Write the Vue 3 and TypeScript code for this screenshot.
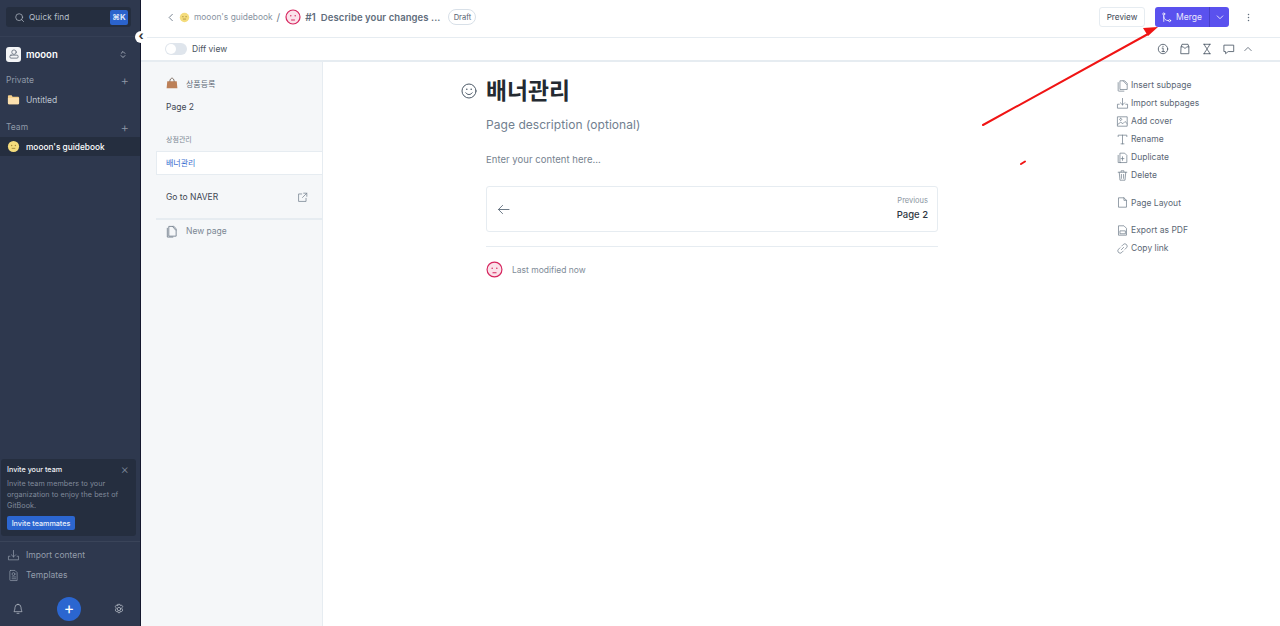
<script setup lang="ts">
interface MenuItem { label: string; icon: string; gap?: boolean }
const menu: MenuItem[] = [
  { label: 'Insert subpage', icon: 'M6 2.500h6l3.500 3.500v8.500H6zM3 5v11a.8.8 0 0 0 .8.8H11M10 2.500l4.500 5' },
  { label: 'Import subpages', icon: 'M9 2v9M6 8l3 3 3-3M4.500 10H2v5.500h14V10h-2.500' },
  { label: 'Add cover', icon: 'M2.500 2.500h13v13h-13zM2.500 13l4-3 3 2 3-3 3 3M6.500 4.500a1.500 1.500 0 1 0 .01 0' },
  { label: 'Rename', icon: 'M3 5V3h12v2M9 3v12M7 15h4' },
  { label: 'Duplicate', icon: 'M6 3h6l3 3v10H6zM3 6v10h3M9 8v5M7 10.500h4' },
  { label: 'Delete', icon: 'M3 4.500h12M7 4V2.500h4V4M4.500 4.500l1 11h7l1-11M7.500 7.500v5.500M10.500 7.500v5.500' },
  { label: 'Page Layout', icon: 'M4 2.500h7l3.500 3.500v9.500H4zM11 2.500V6h3.500', gap: true },
  { label: 'Export as PDF', icon: 'M4 2.500h7l3.500 3.500v9.500H4zM6 9.500h7v4H6z', gap: true },
  { label: 'Copy link', icon: 'M7.500 10.500l3-3M8 5.500l2-2a3 3 0 0 1 4.500 4.500l-2 2M10 12.500l-2 2A3 3 0 0 1 3.500 10l2-2' },
]
</script>

<template>
  <div class="app">
    <aside class="side">
      <div class="search-wrap">
        <div class="search">
          <svg class="ic14" viewBox="0 0 16 16"><circle cx="7.500" cy="7.500" r="5" /><path d="M11 11l3 3" /></svg>
          <span class="search-label">Quick find</span>
          <kbd class="kbd">⌘K</kbd>
        </div>
      </div>
      <div class="org">
        <span class="org-logo">
          <svg viewBox="0 0 16 16"><circle cx="8" cy="5.500" r="3" /><rect x="2.500" y="9.500" width="11" height="4" rx="1.500" /></svg>
        </span>
        <span class="org-name">mooon</span>
        <svg class="updown" viewBox="0 0 8 12"><path d="M1.500 4.500L4 2l2.500 2.500M1.500 7.500L4 10l2.500-2.500" /></svg>
      </div>
      <div class="sec first"><span>Private</span><span class="plus">+</span></div>
      <div class="row">
        <svg class="emoji" viewBox="0 0 14 14"><path d="M1 3.500a1 1 0 0 1 1-1h3l1 1.500h6a1 1 0 0 1 1 1v6a1 1 0 0 1-1 1H2a1 1 0 0 1-1-1z" fill="#f5cf8a" /><path d="M1 5.500h12v5.500a1 1 0 0 1-1 1H2a1 1 0 0 1-1-1z" fill="#fbe0ae" /></svg>
        <span>Untitled</span>
      </div>
      <div class="sec"><span>Team</span><span class="plus">+</span></div>
      <div class="row active">
        <svg class="emoji" viewBox="0 0 14 14"><circle cx="7" cy="7" r="6" fill="#f4dc7c" /><circle cx="5" cy="6" r=".8" fill="#a58a3a" /><circle cx="9" cy="6" r=".8" fill="#a58a3a" /><path d="M5.500 9h3" stroke="#a58a3a" fill="none" /></svg>
        <span>mooon's guidebook</span>
      </div>
      <div class="grow"></div>
      <div class="invite">
        <div class="invite-head"><span>Invite your team</span><span class="x">×</span></div>
        <p>Invite team members to your organization to enjoy the best of GitBook.</p>
        <button class="invite-btn">Invite teammates</button>
      </div>
      <div class="foot-links">
        <div class="flink">
          <svg class="ic12" viewBox="0 0 18 18"><path d="M9 2v9M6 8l3 3 3-3M4 10H2v5h14v-5h-2" /></svg>
          <span>Import content</span>
        </div>
        <div class="flink">
          <svg class="ic12" viewBox="0 0 18 18"><path d="M5 2h6l3 3v11H5a1 1 0 0 1-1-1V3a1 1 0 0 1 1-1zM7 11h5M7 13.500h5" /><circle cx="9" cy="7" r="2" /></svg>
          <span>Templates</span>
        </div>
      </div>
      <div class="foot-btns">
        <svg class="bell" viewBox="0 0 18 18"><path d="M9 2a4.500 4.500 0 0 0-4.500 4.500c0 4-1.500 5.500-1.500 6.500h12c0-1-1.500-2.500-1.500-6.500A4.500 4.500 0 0 0 9 2zM7.500 15.500h3" /></svg>
        <span class="fab">+</span>
        <svg class="bell" viewBox="0 0 18 18"><circle cx="9" cy="9" r="2.500" /><path d="M7.500 2h3l.5 2 2-.8 1.700 2.500-1.500 1.500.1 1.800 1.500 1.500L13 13l-2-.8-.5 2.300h-3L7 12.200 5 13 3.300 10.500l1.500-1.500-.1-1.800L3.300 5.700 5 3.200 7 4z" /></svg>
      </div>
    </aside>

    <span class="collapse">‹</span>

    <main class="main">
      <header class="top">
        <svg class="chev" viewBox="0 0 8 12"><path d="M5.500 2.500L2 6l3.500 3.500" /></svg>
        <svg class="crumb-emoji" viewBox="0 0 14 14"><circle cx="7" cy="7" r="6" fill="#f4dc7c" /><circle cx="5" cy="6" r=".8" fill="#a58a3a" /><circle cx="9" cy="6" r=".8" fill="#a58a3a" /><path d="M5.500 9h3" stroke="#a58a3a" fill="none" /></svg>
        <span class="crumb">mooon's guidebook</span>
        <span class="slash">/</span>
        <svg class="avatar" viewBox="0 0 16 16"><circle cx="8" cy="8" r="7" fill="#fbe2ea" stroke="#d6265f" stroke-width="1.200" /><circle cx="5.800" cy="6.800" r=".7" fill="#d6265f" /><circle cx="10.200" cy="6.800" r=".7" fill="#d6265f" /><path d="M6.500 11h3" stroke="#d6265f" fill="none" /></svg>
        <span class="cr-num">#1</span>
        <span class="cr-title">Describe your changes ...</span>
        <span class="draft">Draft</span>
        <span class="grow"></span>
        <button class="preview">Preview</button>
        <div class="merge">
          <span class="merge-main">
            <svg class="merge-ic" viewBox="0 0 14 14"><circle cx="3.500" cy="2.500" r="1.300" /><circle cx="11" cy="11" r="1.300" /><path d="M3.500 4v8M3.500 6c0 3 2.500 5 6 5" /></svg>
            Merge
          </span>
          <span class="merge-caret"><svg viewBox="0 0 10 6"><path d="M1.500 1L5 4.500 8.500 1" /></svg></span>
        </div>
        <svg class="dots" viewBox="0 0 4 12"><circle cx="2" cy="2" r="1" /><circle cx="2" cy="6" r="1" /><circle cx="2" cy="10" r="1" /></svg>
      </header>

      <div class="diffbar">
        <span class="toggle"><span class="knob"></span></span>
        <span class="diff-label">Diff view</span>
        <span class="grow"></span>
        <div class="tools">
          <svg viewBox="0 0 14 14"><circle cx="7" cy="7" r="5.500" /><path d="M6 6h1.200v4M5.800 10h3M7 3.800v.6" /></svg>
          <svg viewBox="0 0 14 14"><path d="M2.500 4.500l1-3h7l1 3v8h-9zM2.500 4.500h2.500l2 2 2-2h2.500" /></svg>
          <svg viewBox="0 0 14 14"><path d="M3 1.500h8M3 12.500h8M4 1.500c0 3 3 4 3 5.500s-3 2.500-3 5.500M10 1.500c0 3-3 4-3 5.500s3 2.500 3 5.500" /></svg>
          <svg viewBox="0 0 14 14"><path d="M1.500 2.500h11v7.500H6l-3 2.500V10H1.500z" /></svg>
          <svg viewBox="0 0 10 14"><path d="M1 9l4-4 4 4" /></svg>
        </div>
      </div>

      <div class="body">
        <nav class="pages">
          <div class="p-row first-row">
            <svg class="bag" viewBox="0 0 14 14"><path d="M1.500 5h11l.8 8H.700z" fill="#bc8058" /><path d="M4.500 5c0-5 5-5 5 0" stroke="#6d5a4d" fill="none" /></svg>
            <span class="ko-sm">상품등록</span>
          </div>
          <div class="p-row page2">Page 2</div>
          <div class="p-group">상점관리</div>
          <div class="p-current">배너관리</div>
          <div class="p-link">
            <span>Go to NAVER</span>
            <svg class="ext" viewBox="0 0 14 14"><path d="M6 2.500H2v9.500h9.500V8M8.500 1.500h4v4M12.500 1.500L7 7" /></svg>
          </div>
          <div class="p-new">
            <svg class="new-ic" viewBox="0 0 14 14"><path d="M4.500 1.500h5l2.500 2.500v8H4.500zM2.500 3.500v9.500h6M8 1.500l3.500 4" /></svg>
            <span>New page</span>
          </div>
        </nav>

        <section class="doc">
          <div class="article">
            <svg class="smile" viewBox="0 0 16 16"><circle cx="8" cy="8" r="7" /><path d="M4.800 9.800c1.500 2.400 4.900 2.400 6.400 0" /><circle class="dot" cx="5.800" cy="6.200" r=".8" /><circle class="dot" cx="10.200" cy="6.200" r=".8" /></svg>
            <h1>배너관리</h1>
            <p class="desc">Page description (optional)</p>
            <p class="enter">Enter your content here...</p>
            <div class="prev">
              <svg class="arrow" viewBox="0 0 14 12"><path d="M13 6H1.500M6 1.500L1.500 6 6 10.500" /></svg>
              <div class="prev-text">
                <small>Previous</small>
                <strong>Page 2</strong>
              </div>
            </div>
            <div class="modified">
              <svg class="mod-av" viewBox="0 0 16 16"><circle cx="8" cy="8" r="7" fill="#fbe2ea" stroke="#d6265f" stroke-width="1.100" /><circle cx="5.800" cy="6.800" r=".7" fill="#d6265f" /><circle cx="10.200" cy="6.800" r=".7" fill="#d6265f" /><path d="M6.500 11h3" stroke="#d6265f" fill="none" /></svg>
              <span>Last modified now</span>
            </div>
          </div>
          <ul class="actions">
            <li v-for="m in menu" :key="m.label" :class="{ gap: m.gap }">
              <svg viewBox="0 0 18 18"><path :d="m.icon" /></svg>
              <span>{{ m.label }}</span>
            </li>
          </ul>
        </section>
      </div>
    </main>

    <svg class="annot" viewBox="0 0 1280 626">
      <path d="M983 125L1148 34" stroke="#f01414" stroke-width="2" fill="none" />
      <path d="M1158 27l-15 1 5 8z" fill="#f01414" />
      <path d="M1021 164l4-2.500" stroke="#f01414" stroke-width="2" fill="none" />
    </svg>
  </div>
</template>

<style>
html, body { margin: 0; padding: 0; background: #fff; }
</style>

<style scoped>
* { box-sizing: border-box; }
.app { position: relative; display: flex; width: 1280px; height: 626px; overflow: hidden; font-family: Inter, "Noto Sans CJK KR", sans-serif; color: #242a31; }
svg { fill: none; stroke: currentColor; stroke-linecap: round; stroke-linejoin: round; flex: none; }
.grow { flex: 1; }

.side { width: 141px; flex: none; display: flex; flex-direction: column; background: #2e384e; border-right: 1px solid #14182e; color: #c5cbd5; font-size: 8.500px; }
.search-wrap { height: 37px; padding: 7px 9px 0 6px; border-bottom: 1px solid #353f55; }
.search { height: 20px; display: flex; align-items: center; padding: 0 3px 0 8px; background: #252e3f; border-radius: 3px; color: #b9c0cc; }
.ic14 { width: 11px; height: 11px; }
.search-label { margin-left: 4px; flex: 1; font-size: 8.200px; letter-spacing: .1px; }
.kbd { width: 18px; height: 15px; border-radius: 2px; background: #2b63cc; color: #dfe8f8; font: 700 8px Inter, sans-serif; display: flex; align-items: center; justify-content: center; }
.org { display: flex; align-items: center; height: 16px; margin: 9px 0 0 6px; }
.org-logo { width: 15px; height: 15px; border-radius: 3px; background: #f3f4f6; color: #56606f; display: flex; align-items: center; justify-content: center; }
.org-logo svg { width: 12px; height: 12px; }
.org-name { margin-left: 5px; flex: 1; color: #fff; font-size: 9.500px; font-weight: 600; }
.updown { width: 6px; height: 9px; margin-right: 14px; color: #c5cbd5; }
.sec { display: flex; justify-content: space-between; align-items: center; height: 14px; padding: 0 11px 0 6px; margin-top: 10px; color: #8f98a8; font-size: 8.500px; }
.sec.first { margin-top: 11px; }
.plus { font-size: 13px; font-weight: 300; line-height: 1; }
.row { display: flex; align-items: center; height: 19px; padding-left: 7px; gap: 6px; font-size: 8.500px; color: #bcc3cf; }
.sec + .row { margin-top: 3px; }
.row + .sec { margin-top: 11px; }
.row.active { background: #252e3f; color: #fff; font-weight: 500; font-size: 8.300px; }
.emoji { width: 13px; height: 13px; stroke: none; }
.emoji path[stroke] { stroke: #a58a3a; }
.invite { width: 135px; height: 77px; margin: 0 0 5px 1px; padding: 5px 6px; background: #252e3f; border-radius: 3px; }
.invite-head { display: flex; justify-content: space-between; align-items: center; height: 10px; color: #f0f2f5; font-size: 7.200px; font-weight: 500; }
.x { color: #798395; font-size: 13px; margin-right: 1px; font-weight: 300; }
.invite p { margin: 5px 0 0; color: #808a9b; font-size: 7.200px; line-height: 10.800px; letter-spacing: .05px; }
.invite-btn { display: block; margin-top: 5px; width: 68px; height: 14px; padding: 0; border: 0; border-radius: 2px; background: #2c66d0; color: #e8effb; font: 500 7.200px Inter, sans-serif; }
.foot-links { border-top: 1px solid #3a4459; padding: 3px 0 0 7px; height: 50px; }
.flink { display: flex; align-items: center; height: 20px; gap: 6px; color: #939cab; font-size: 8.500px; }
.ic12 { width: 13px; height: 13px; }
.foot-btns { display: flex; align-items: center; height: 35px; padding: 0 15px 0 12px; justify-content: space-between; color: #c5cbd5; }
.bell { width: 12px; height: 12px; }
.fab { width: 24px; height: 24px; border-radius: 50%; background: #2b66d0; color: #fff; font: 400 16px/23px Inter, sans-serif; text-align: center; margin-left: 1px; }

.collapse { position: absolute; left: 135px; top: 31px; width: 12px; height: 12px; border-radius: 50%; background: #fff; color: #333; font: 700 12px/10px Inter, sans-serif; text-align: center; z-index: 2; }

.main { flex: 1; min-width: 0; display: flex; flex-direction: column; }
.top { height: 38px; display: flex; align-items: center; padding: 0 30px 3px 26px; border-bottom: 1px solid #e6ecf1; }
.chev { width: 8px; height: 11px; color: #6d7a89; }
.crumb-emoji { width: 11px; height: 11px; margin-left: 4px; stroke: none; }
.crumb-emoji path[stroke] { stroke: #a58a3a; }
.crumb { margin-left: 4px; font-size: 8.400px; color: #88939f; }
.slash { margin: 0 5px 0 4px; font-size: 10px; color: #6d7a89; }
.avatar { width: 16px; height: 16px; stroke: none; margin-right: 4px; }
.avatar path, .mod-av path { stroke: #d6265f; }
.avatar circle:first-child, .mod-av circle:first-child { stroke: #d6265f; }
.cr-num { font-size: 10px; font-weight: 600; color: #5f6d7c; }
.cr-title { margin-left: 5px; font-size: 9.500px; font-weight: 600; color: #5f6d7c; letter-spacing: .08px; }
.draft { margin-left: 8px; width: 28px; height: 16px; border: 1px solid #d8e0e8; border-radius: 8px; color: #56626f; font-size: 7.500px; display: flex; align-items: center; justify-content: center; }
.preview { width: 46px; height: 20px; padding: 0; border: 1px solid #e6ecf1; border-radius: 3px; background: #fff; color: #3d4653; font: 400 8.200px Inter, sans-serif; }
.merge { display: flex; width: 74px; height: 20px; margin-left: 10px; background: #5a51ee; border-radius: 3px; color: #e9e7fd; font-size: 8.500px; }
.merge-main { flex: 1; display: flex; align-items: center; padding-left: 6px; gap: 4px; }
.merge-ic { width: 11px; height: 11px; color: #fff; }
.merge-caret { width: 20px; display: flex; align-items: center; justify-content: center; border-left: 1px solid #473fc8; }
.merge-caret svg { width: 8px; height: 5px; color: #fff; }
.dots { width: 3px; height: 9px; margin-left: 18px; fill: #5f6d7c; stroke: none; }

.diffbar { height: 24px; display: flex; align-items: center; padding: 0 28px 0 24px; border-bottom: 2px solid #e6ecf1; }
.toggle { width: 22px; height: 12px; border-radius: 6px; background: #dfe5ec; padding: 1px; display: block; }
.knob { display: block; width: 10px; height: 10px; border-radius: 50%; background: #fff; }
.diff-label { margin-left: 5px; font-size: 8.500px; color: #4a5460; }
.tools { display: flex; align-items: center; gap: 10px; color: #4f5b69; }
.tools svg { width: 12px; height: 12px; }
.tools svg:last-child { width: 8px; margin-left: -1px; }

.body { flex: 1; display: flex; min-height: 0; }
.pages { width: 182px; flex: none; background: #f5f7f9; border-right: 1px solid #e6ecf1; font-size: 8.500px; color: #3d4653; }
.p-row { display: flex; align-items: center; padding-left: 25px; height: 20px; }
.first-row { margin-top: 11px; gap: 8px; }
.page2 { margin-top: 4px; }
.bag { width: 12px; height: 12px; stroke: none; }
.bag path[stroke] { stroke: #6d5a4d; }
.ko-sm { font-size: 8px; color: #5b6775; }
.p-group { margin: 17px 0 0 25px; height: 11px; line-height: 11px; font-size: 7px; color: #7b8794; }
.p-current { margin: 6px 0 0 15px; height: 24px; line-height: 22px; padding-left: 9px; background: #fff; border: 1px solid #e6ecf1; border-right: 0; color: #3b6fd0; font-size: 8px; }
.p-link { display: flex; align-items: center; justify-content: space-between; height: 22px; margin: 11px 14px 0 25px; }
.ext { width: 11px; height: 11px; color: #7b8794; }
.new-ic { width: 13px; height: 13px; color: #7b8794; }
.p-new { display: flex; align-items: center; gap: 8px; height: 24px; margin: 10px 0 0 15px; padding-left: 9px; border-top: 2px solid #e6ecf1; color: #7b8794; }

.doc { flex: 1; position: relative; display: flex; padding-left: 163px; }
.article { position: relative; width: 452px; }
.smile { position: absolute; left: -25px; top: 21px; width: 16px; height: 16px; color: #4d5a68; }
.smile .dot { fill: #4d5a68; stroke: none; }
h1 { margin: 13px 0 0; font-size: 22.800px; line-height: 32px; font-weight: 700; color: #242a31; font-family: Inter, "Noto Sans CJK KR", sans-serif; }
.desc { margin: 10px 0 0; font-size: 12px; line-height: 16px; color: #71808f; letter-spacing: .05px; }
.enter { margin: 21px 0 0; font-size: 9.500px; line-height: 12px; color: #76838f; letter-spacing: .04px; }
.prev { display: flex; align-items: center; justify-content: space-between; height: 46px; margin-top: 20px; padding: 0 9px 0 10px; border: 1px solid #e6ecf1; border-radius: 3px; }
.arrow { width: 13px; height: 11px; color: #5f6d7c; }
.prev-text { display: flex; flex-direction: column; align-items: flex-end; margin-bottom: 2px; }
.prev-text small { font-size: 7.500px; line-height: 10px; color: #8b96a2; }
.prev-text strong { margin-top: 3px; font-size: 9.500px; line-height: 12px; font-weight: 500; color: #2f3742; }
.modified { display: flex; align-items: center; gap: 9px; margin-top: 14px; padding-top: 14px; border-top: 1px solid #e6ecf1; color: #808c98; font-size: 8.500px; }
.mod-av { width: 17px; height: 17px; stroke: none; }
.actions { list-style: none; margin: 0; padding: 14px 0 0; margin-left: 178px; font-size: 8.500px; color: #5b6775; }
.actions li { display: flex; align-items: center; gap: 2px; height: 18px; }
.actions li.gap { margin-top: 9.500px; }
.actions svg { width: 13px; height: 13px; color: #6d7a89; }
.actions span { letter-spacing: .02px; }

.annot { position: absolute; inset: 0; width: 1280px; height: 626px; pointer-events: none; z-index: 3; stroke: none; }
</style>
